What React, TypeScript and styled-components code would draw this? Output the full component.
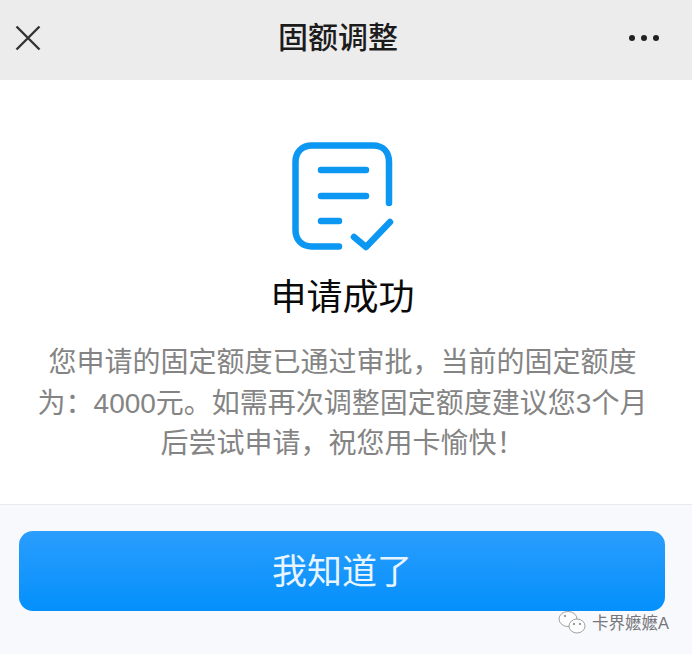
import React from "react";
import styled, { createGlobalStyle } from "styled-components";

const GlobalStyle = createGlobalStyle`
  html, body {
    margin: 0;
    padding: 0;
    background: #ffffff;
  }
  * {
    box-sizing: border-box;
  }
`;

const Page = styled.div`
  position: relative;
  width: 692px;
  height: 654px;
  overflow: hidden;
  display: flex;
  flex-direction: column;
  font-family: "Liberation Sans", "Noto Sans CJK SC", sans-serif;
  background: #ffffff;
`;

const NavBar = styled.header`
  height: 80px;
  flex-shrink: 0;
  background: #ececec;
  display: flex;
  align-items: center;
  justify-content: space-between;
  padding: 0 32px 4px 15px;
`;

const NavIcon = styled.svg`
  display: block;
  width: 26px;
  height: 26px;
  color: #333333;
`;

const MoreIcon = styled.svg`
  display: block;
  width: 32px;
  height: 8px;
  color: #222222;
`;

const NavTitle = styled.h1`
  margin: 0 0 0 7px;
  font-size: 30px;
  line-height: 40px;
  font-weight: 500;
  color: #1c1c1c;
`;

const Content = styled.main`
  flex: 1;
  display: flex;
  flex-direction: column;
  align-items: center;
  padding: 61px 7px 0 0;
  background: #ffffff;
`;

const StatusIcon = styled.svg`
  display: block;
  width: 102px;
  height: 110px;
  color: #0c97f2;
`;

const Heading = styled.h2`
  margin: 22px 0 0;
  font-size: 36px;
  line-height: 50px;
  font-weight: 400;
  color: #0a0a0a;
`;

const Message = styled.p`
  margin: 20px 0 0;
  width: 620px;
  font-size: 28px;
  line-height: 40.5px;
  text-align: center;
  color: #848484;
`;

const Footer = styled.footer`
  height: 150px;
  flex-shrink: 0;
  padding: 26px 27px 0 19px;
  background: #f8f9fd;
  border-top: 1px solid #e9e9ee;
`;

const ConfirmButton = styled.button`
  display: block;
  width: 100%;
  height: 80px;
  border: none;
  border-radius: 14px;
  background: linear-gradient(180deg, #2a9dfd 0%, #0490fb 100%);
  color: #e8f4ff;
  font-family: inherit;
  font-size: 35px;
  padding: 0 0 6px;
`;

const Watermark = styled.div`
  position: absolute;
  left: 558px;
  top: 611px;
  display: flex;
  align-items: center;
  gap: 6px;
  color: #77777b;
  font-size: 16.500px;
  line-height: 24px;
`;

const WechatIcon = styled.svg`
  display: block;
  width: 28px;
  height: 24px;
`;

export default function App() {
  return (
    <Page>
      <GlobalStyle />
      <NavBar>
        <NavIcon viewBox="0 0 26 26" fill="none" stroke="currentColor" strokeWidth="2.4">
          <path d="M1.5 1.5 24.5 24.5M24.5 1.5 1.5 24.5" />
        </NavIcon>
        <NavTitle>固额调整</NavTitle>
        <MoreIcon viewBox="0 0 32 8" fill="currentColor">
          <circle cx="4" cy="4" r="3" />
          <circle cx="16" cy="4" r="3" />
          <circle cx="28" cy="4" r="3" />
        </MoreIcon>
      </NavBar>
      <Content>
        <StatusIcon viewBox="0 0 102 110" fill="none" stroke="currentColor" strokeWidth="6.500" strokeLinecap="round" strokeLinejoin="round">
          <path d="M97 62V21C97 11 91 4.500 81 4.500H20C10 4.500 3.500 11 3.500 21V89C3.500 99 10 105.500 20 105.500H47" />
          <path d="M29 29H74M29 55H74M29 80H47" />
          <path d="M62 96 74 106 98 81" />
        </StatusIcon>
        <Heading>申请成功</Heading>
        <Message>
          您申请的固定额度已通过审批，当前的固定额度为：4000元。如需再次调整固定额度建议您3个月后尝试申请，祝您用卡愉快！
        </Message>
      </Content>
      <Footer>
        <ConfirmButton type="button">我知道了</ConfirmButton>
      </Footer>
      <Watermark>
        <WechatIcon viewBox="0 0 28 24" fill="#ffffff" stroke="#8a8a8a" strokeWidth="0.8">
          <ellipse cx="10" cy="8" rx="9" ry="7.500" />
          <ellipse cx="19" cy="15" rx="8" ry="7" />
          <circle cx="7" cy="5" r="0.8" fill="#8a8a8a" />
          <circle cx="16" cy="13" r="0.8" fill="#8a8a8a" />
          <circle cx="22" cy="13" r="0.8" fill="#8a8a8a" />
        </WechatIcon>
        <span>卡界嬷嬷A</span>
      </Watermark>
    </Page>
  );
}
